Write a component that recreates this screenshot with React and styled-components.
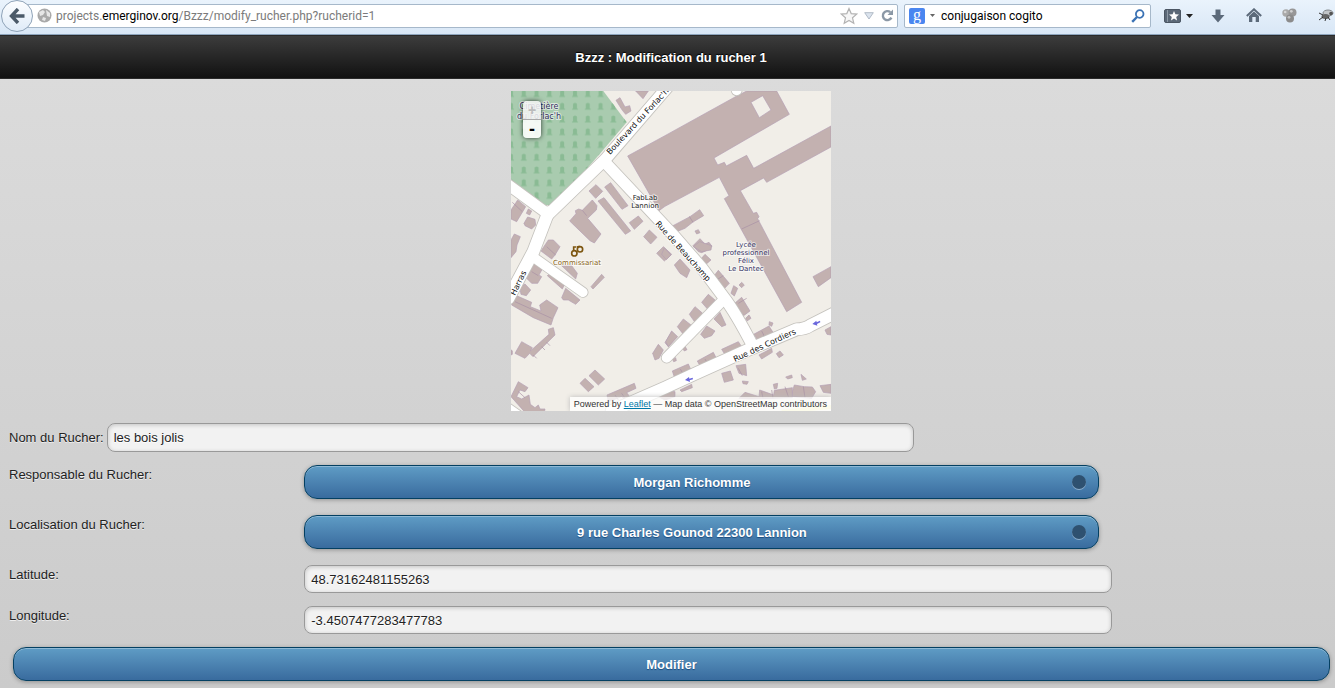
import React, { useState } from 'react'
import styled, { createGlobalStyle } from 'styled-components'

const GlobalStyle = createGlobalStyle`
* { box-sizing: border-box; }

body {
  margin: 0;
  min-height: 100vh;
  background: #cccccc linear-gradient(#dddddd, #cbcbcb) no-repeat;
  color: #222;
  font-family: 'Liberation Sans', Arial, sans-serif;
  font-size: 13px;
}
`

/* ---------- browser bar ---------- */

const Toolbar = styled.nav`
display: flex;
align-items: center;
height: 35px;
padding: 0 0 3px 1px;
background: linear-gradient(#eaf3fc, #d9e7f6);
border-bottom: 1px solid #8ea5bd;
font-family: Roboto, 'Open Sans', sans-serif;
font-size: 12px;
`

const IconButton = styled.button`
display: flex;
align-items: center;
justify-content: ${props => props.$align || 'center'};
gap: 5px;
flex: none;
width: ${props => props.$width || 20}px;
height: 24px;
padding: 0;
border: none;
background: none;
`

const BackButton = styled(IconButton)`
position: relative;
z-index: 1;
width: 32px;
height: 32px;
margin-right: -8px;
border: 1px solid #8fa3b8;
border-radius: 50%;
background: linear-gradient(#fdfeff, #dfebf8);
`

const Field = styled.div`
display: flex;
align-items: center;
height: 24px;
background: white;
border: 1px solid #a6b8ca;
border-radius: 2px;
`

const UrlField = styled(Field)`
flex: 1;
min-width: 0;
padding: 0 2px 0 11px;
`

const Address = styled.a`
flex: 1;
min-width: 0;
margin-left: 4px;
overflow: hidden;
white-space: nowrap;
color: #7b7b7b;
text-decoration: none;

span { color: black; }
`

const SearchField = styled(Field)`
flex: none;
width: 247px;
margin: 0 5px 0 6px;
padding: 0 2px 0 4px;

input {
  flex: 1;
  min-width: 0;
  padding: 0;
  margin-left: 1px;
  border: none;
  outline: none;
  background: none;
  color: black;
  font: inherit;
}
`

const Engine = styled.span`
width: 16px;
height: 16px;
border-radius: 2px;
background: #4a86f0;
color: white;
font: 16px/13px 'Liberation Serif', serif;
text-align: center;
`

/* ---------- page ---------- */

const Header = styled.header`
height: 44px;
padding-left: 7px;
background: linear-gradient(#3c3c3c, #111111);
border-top: 1px solid #2a2a2a;
border-bottom: 1px solid #2a2a2a;
color: white;
text-align: center;
text-shadow: 0 -1px 1px black;

h1 {
  margin: 0;
  font-size: 13px;
  line-height: 43px;
}
`

const Content = styled.main`
padding: 12px 2px 7px 9px;
`

const MapBox = styled.div`
position: relative;
width: 320px;
height: 320px;
margin: 0 auto 12px;
overflow: hidden;
background: #f1eee8;

svg { display: block; }
`

const ZoomControl = styled.div`
position: absolute;
top: 10px;
left: 12px;
width: 18px;
border-radius: 4px;
box-shadow: 0 0 5px rgba(0, 0, 0, 0.7);
overflow: hidden;

button {
  display: block;
  width: 18px;
  height: 18px;
  padding: 0;
  border: none;
  background: rgba(255, 255, 255, 0.88);
  color: black;
  font: bold 18px/16px 'Liberation Sans', sans-serif;
}

button:first-child {
  height: 19px;
  border-bottom: 1px solid #aaa;
  font-size: 14px;
}

button:disabled {
  background: rgba(244, 244, 244, 0.85);
  color: #bbb;
}
`

const Attribution = styled.div`
position: absolute;
right: 0;
bottom: 0;
padding: 0 4px;
background: rgba(255, 255, 255, 0.75);
box-shadow: 0 0 5px #bbb;
color: #333;
font-size: 9px;
line-height: 14px;
white-space: nowrap;

a { color: #0078a8; }
`

const Row = styled.div`
display: flex;
align-items: ${props => props.$inline ? 'center' : 'flex-start'};
gap: ${props => props.$inline ? 3 : 4}px;
margin-bottom: ${props => props.$space || 13}px;
`

const Label = styled.label`
flex: 0 0 ${props => props.$auto ? 'auto' : '22%'};
line-height: 19px;
text-shadow: 0 1px 0 #eee;
`

const TextInput = styled.input`
width: calc(60% + 13px);
height: ${props => props.$height || 28}px;
padding: 0 6px;
background: #f2f2f2;
border: 1px solid #999;
border-radius: 8px;
box-shadow: inset 0 1px 4px rgba(0, 0, 0, 0.2);
color: #222;
font: inherit;
text-shadow: 0 1px 0 white;
`

const blue = `
height: 34px;
background: linear-gradient(#5f9cc5, #396b9e);
border: 1px solid #044062;
border-radius: 13px;
box-shadow: inset 0 1px 0 rgba(255, 255, 255, 0.3), 0 1px 4px rgba(0, 0, 0, 0.3);
color: white;
font: bold 13px 'Liberation Sans', Arial, sans-serif;
text-shadow: 0 1px 1px #194b7e;
`

const SelectWrap = styled.div`
position: relative;
width: 60%;

&::after {
  content: '';
  position: absolute;
  top: 10px;
  right: 13px;
  width: 14px;
  height: 14px;
  border-radius: 50%;
  background: #2e5170;
  box-shadow: 0 1px 0 rgba(255, 255, 255, 0.4);
  pointer-events: none;
}
`

const Select = styled.select`
${blue}
display: block;
width: 100%;
padding: 0 19px 0 0;
appearance: none;
text-align: center;
text-align-last: center;
`

const Submit = styled.button`
${blue}
display: block;
width: calc(100% - 7px);
margin: 0 3px 0 4px;
padding: 0;
`

/* ---------- map data, drawn on a 3x grid and scaled down ---------- */

const roads = [
  { d: 'M500 -8 L300 224 L130 388', w: 34 },
  { d: 'M0 292 L130 388', w: 32 },
  { d: 'M130 382 L85 500 L10 640', w: 36 },
  { d: 'M90 520 L234 622', w: 28 },
  { d: 'M300 232 L510 456 L590 548 L655 635 Q690 680 742 780', w: 34 },
  { d: 'M655 645 L485 818', w: 30 },
  { d: 'M990 684 L915 722 Q900 732 875 733 L740 790 L580 862 L480 908 L320 978', w: 36 },
  { d: 'M695 0 V16', w: 30 },
  { d: 'M0 958 L60 1000', w: 20 },
]

const cemetery = 'M18 18 H295 L365 112 L290 200 L150 360 H118 L18 285 Z'

const school = 'M368 213 L480 152 L690 36 L725 18 L815 18 L853 88 L627 219 L638 240 L658 232 L664 243 L725 211 L746 250 L978 123 V186 L785 292 L776 279 L706 317 L745 385 L755 382 L762 395 L758 401 L890 652 L845 680 L658 341 L672 332 L643 277 L480 364 L462 377 Z M738 52 L763 98 L798 75 L773 32 Z'

const blocks = [
  { x: 0, y: 0, shapes: [
    '333,46 345,38 360,66 374,62 378,78 362,88 352,76',
    '392,18 430,18 414,41',
    '252,318 273,299 293,319 272,340',
    '299,306 317,293 369,362 351,373',
    '279,348 297,338 377,438 361,448',
    '194,408 213,386 211,377 221,372 232,376 262,345 276,362 274,375 248,400 288,447 268,474 255,467',
    '373,413 400,393 414,409 388,433',
    '416,455 433,435 456,457 437,477',
    '455,505 475,485 500,508 478,528',
    '18,375 38,345 62,365 35,410 18,402',
    '64,385 70,372 80,378 74,390',
    '57,415 68,396 90,403 92,420 80,432 60,422',
    '18,465 28,447 46,455 36,480 33,500 18,518',
  ] },
  { x: 480, y: 0, shapes: [
    '24,422 75,395 104,374 116,392 84,411 60,430 35,440',
    '90,438 100,434 105,443 95,447',
    '84,482 105,461 120,477 132,472 141,484 122,498 110,503 100,500',
    '-2,488 18,510 4,524 -10,508',
  ] },
  { x: 0, y: 480, shapes: [
    '108,18 130,-15 145,-15 165,5 150,30 140,42',
    '78,72 90,50 112,72 102,90 110,95 98,115 80,115 60,95',
    '44,125 60,117 77,135 64,152 48,148',
    '127,92 135,85 178,120 172,132',
    '170,62 200,62 217,85 212,102',
    '258,125 290,88 298,97 264,132',
    '170,158 182,130 225,165 212,178 190,165 175,165',
    '20,180 30,150 80,172 76,185 108,198 104,180 125,165 159,188 145,218 138,240 85,218',
    '30,325 50,290 82,308 76,318 132,268 130,253 145,248 150,270 84,335 74,325 60,340',
    '18,314 22,318 22,328 18,330',
    '225,415 240,400 267,425 250,440',
    '252,392 270,375 299,402 280,420',
    '306,450 388,415 393,430 365,443 380,462 366,470 350,455 310,470',
    '18,455 40,410 69,428 60,440 45,435 35,455 50,462 72,450 76,478 90,488 100,480 105,492 120,492 118,502 60,502',
    '443,325 460,298 475,315 462,340 450,345',
    '480,293 500,260 515,275 490,305',
  ] },
  { x: 480, y: 480, shapes: [
    '85,5 104,-10 140,2 138,15 110,20',
    '105,45 120,28 138,45 118,62',
    '28,60 45,42 75,75 65,98 45,85',
    '143,98 160,76 193,115 177,132',
    '198,145 206,122 218,130 208,153',
    '222,120 230,112 238,120 230,128',
    '209,175 230,157 255,198 236,212',
    '242,220 252,210 258,220 246,228',
    '110,172 130,148 150,165 130,195',
    '73,208 90,185 113,205 90,232',
    '37,245 55,222 78,240 55,268',
    '2,290 20,258 38,275 10,305',
    '147,222 165,202 183,240 170,245',
    '107,268 125,243 150,258 140,272 118,280',
    '266,268 312,243 324,262 280,288',
    '313,230 324,234 320,244 312,240',
    '170,313 220,290 230,305 182,332',
    '97,348 145,322 155,342 108,368',
    '22,378 70,357 78,375 30,402',
    '282,330 320,310 322,322 290,342',
    '334,326 345,318 355,330 342,338',
    '213,362 242,358 245,392 222,385',
    '170,385 196,378 205,405 178,412',
    '232,408 250,410 246,418 234,416',
    '362,396 380,390 382,398 368,402',
    '408,388 424,402 412,406',
    '382,440 388,420 418,425 442,426 452,440 440,460 382,455',
    '465,422 498,418 498,445 475,442',
    '222,460 240,442 282,455 284,435 326,450 328,436 382,428 382,458 260,462',
    '325,418 338,415 336,430 328,432',
    '444,95 498,65 498,98 460,125',
    '480,255 498,245 498,270 486,268',
    '-20,455 10,438 30,440 30,455 0,465',
    '45,435 80,418 82,428 50,440',
    '22,342 32,338 34,347 26,350',
    '52,310 60,304 66,314 58,318',
  ] },
]

// party walls between neighbouring houses
const walls = 'M710 432 L764 407 M553 394 L564 412 M30 650 L140 700 M80 560 L100 572 M125 485 L152 510 M22 352 L52 380 M700 850 L712 872 M526 852 L538 874 M600 822 L612 844 M770 738 L780 758 M670 798 L680 818 M700 655 L725 640 M635 585 L655 572 M840 905 L850 935 M895 905 L900 938 M800 915 L804 940 M770 920 L774 940 M330 930 L340 945 M350 925 L362 942 M40 920 L60 938 M85 810 L95 820 M110 785 L120 795 M125 772 L135 782 M232 376 L245 392'

const streets = [
  { text: 'Boulevard du Forlac\'h', x: 99, y: 64, angle: -47 },
  { text: 'Rue de Beauchamp', x: 144, y: 133, angle: 48 },
  { text: 'Rue des Cordiers', x: 224, y: 271, angle: -25 },
  { text: 'Harras', x: 4, y: 205, angle: -64 },
]

const places = [
  { lines: ['Cimetière', 'du Forlac\'h'], x: 28, y: 18, color: '#34315f', size: 8 },
  { lines: ['FabLab', 'Lannion'], x: 134, y: 109, color: '#222222', size: 7 },
  { lines: ['Lycée', 'professionnel', 'Félix', 'Le Dantec'], x: 235, y: 156, color: '#34315f', size: 7 },
  { lines: ['Commissariat'], x: 66, y: 174, color: '#8a6420', size: 7 },
]

const MapLabel = styled.text`
font-family: 'DejaVu Sans', sans-serif;
font-size: ${props => props.$size || 8}px;
fill: ${props => props.$color || '#111'};
stroke: ${props => props.$halo || 'none'};
stroke-width: 2px;
stroke-linejoin: round;
paint-order: stroke;
`

const StreetMap = () => {
  return (
    <svg width="320" height="320" viewBox="0 0 320 320" role="img" aria-label="Carte">
      <defs>
        <pattern id="tombs" x="0" y="5" width="38.4" height="38.2" patternUnits="userSpaceOnUse">
          <path d="M9 28 H12 V15 Q12 10 18 10 Q24 10 24 15 V28 H27 V31 H9 Z" fill="#8abb94" />
        </pattern>
      </defs>
      <g transform="scale(0.33333) translate(-18 -18)">
        <path d={cemetery} fill="#a9cbaf" />
        <path d={cemetery} fill="url(#tombs)" />
        <g fill="#c3b1b0" stroke="#b49fb3" strokeWidth="2">
          <path d={school} fillRule="evenodd" />
          {blocks.map(block => (
            <g key={`${block.x}-${block.y}`} transform={`translate(${block.x} ${block.y})`}>
              {block.shapes.map(points => <polygon key={points} points={points} />)}
            </g>
          ))}
          <path d={walls} fill="none" stroke="#a78fa5" />
        </g>
        <g fill="none" strokeLinecap="round" strokeLinejoin="round">
          {roads.map(road => <path key={road.d} d={road.d} stroke="#c4c2bd" strokeWidth={road.w + 5} />)}
          {roads.map(road => <path key={road.d} d={road.d} stroke="#ffffff" strokeWidth={road.w} />)}
        </g>
        <path d="M830 980 L978 966" stroke="#f3efae" strokeWidth="12" />
        <g fill="#6a67dc">
          <path d="M540 885 L552 876 L553 881 L563 878 L564 883 L554 886 L555 891 Z" />
          <path d="M922 717 L934 707 L935 712 L945 707 L946 712 L936 717 L937 722 Z" />
        </g>
        <g fill="none" stroke="#7d5610" strokeWidth="5">
          <circle cx="208" cy="505" r="8" />
          <circle cx="225" cy="493" r="8" />
          <path d="M206 496 V486 H214 M216 486 L224 484" />
        </g>
      </g>
      {streets.map(street => (
        <MapLabel key={street.text} $halo="white"
          transform={`translate(${street.x} ${street.y}) rotate(${street.angle})`}>
          {street.text}
        </MapLabel>
      ))}
      {places.map(place => (
        <MapLabel key={place.lines[0]} $size={place.size} $color={place.color}
          $halo="rgba(255, 255, 255, 0.6)" textAnchor="middle">
          {place.lines.map((line, i) => (
            <tspan key={line} x={place.x} y={place.y + i * (place.size === 7 ? 8 : 10)}>{line}</tspan>
          ))}
        </MapLabel>
      ))}
    </svg>
  )
}

const BrowserBar = () => {
  return (
    <Toolbar>
      <BackButton aria-label="Page précédente">
        <svg width="16" height="16" viewBox="0 0 16 16" fill="none" stroke="#4b5a69" strokeWidth="3.4">
          <path d="M9 1 L2.5 8 L9 15 M2.5 8 H15.5" />
        </svg>
      </BackButton>
      <UrlField>
        <svg width="15" height="15" viewBox="0 0 15 15">
          <circle cx="7.5" cy="7.5" r="7" fill="#a9a9a9" />
          <path d="M2 4 L6 2 L8 4 L6 7 L3 8 Z M9 2 L13 5 L13 9 L10 8 Z M6 9 L9 10 L8 13 L5 12 Z" fill="#e6e6e6" />
        </svg>
        <Address href="/">projects.<span>emerginov.org</span>/Bzzz/modify_rucher.php?rucherid=1</Address>
        <IconButton aria-label="Marquer cette page">
          <svg width="18" height="18" viewBox="0 0 18 18">
            <path d="M9 1.5 L11.2 6.6 L16.7 7.1 L12.5 10.8 L13.8 16.3 L9 13.4 L4.2 16.3 L5.5 10.8 L1.3 7.1 L6.8 6.6 Z" fill="#f7f7f7" stroke="#b3b3b3" strokeWidth="1.2" />
          </svg>
        </IconButton>
        <IconButton aria-label="Historique">
          <svg width="10" height="8" viewBox="0 0 10 8">
            <path d="M0.7 0.7 H9.3 L5 7 Z" fill="#dce4ee" stroke="#b0bac6" />
          </svg>
        </IconButton>
        <IconButton $width={16} aria-label="Actualiser">
          <svg width="13" height="13" viewBox="0 0 13 13">
            <path d="M9.3 3.2 A4.5 4.5 0 1 0 10.4 8.6" fill="none" stroke="#8b98a6" strokeWidth="2.4" />
            <path d="M12 0.5 V6 H6.5 Z" fill="#8b98a6" />
          </svg>
        </IconButton>
      </UrlField>
      <SearchField>
        <Engine>g</Engine>
        <IconButton $width={15} aria-label="Moteurs de recherche">
          <svg width="5" height="3" viewBox="0 0 5 3"><path d="M0 0 H5 L2.5 3 Z" fill="#666" /></svg>
        </IconButton>
        <input aria-label="Recherche" defaultValue="conjugaison cogito" />
        <IconButton aria-label="Rechercher">
          <svg width="14" height="14" viewBox="0 0 14 14" fill="none" stroke="#3a72b4">
            <circle cx="8.7" cy="5" r="3.8" strokeWidth="1.8" />
            <path d="M6 8 L1.2 12.8" strokeWidth="2.4" />
          </svg>
        </IconButton>
      </SearchField>
      <IconButton $width={44} aria-label="Marque-pages">
        <svg width="17" height="14" viewBox="0 0 17 14">
          <rect x="0.5" y="0.5" width="16" height="13" rx="1.5" fill="#5b6877" stroke="#4b5663" />
          <path d="M3.5 1 V13" stroke="#8c98a5" />
          <path d="M10 2 L11.4 5.3 L15 5.5 L12.2 7.9 L13.1 11.5 L10 9.5 L6.9 11.5 L7.8 7.9 L5 5.5 L8.6 5.3 Z" fill="white" />
        </svg>
        <svg width="7" height="4" viewBox="0 0 7 4"><path d="M0 0 H7 L3.5 4 Z" fill="#222" /></svg>
      </IconButton>
      <IconButton $width={36} aria-label="Téléchargements">
        <svg width="14" height="14" viewBox="0 0 14 14">
          <path d="M4.5 0.5 H9.5 V6 H13.5 L7 13.5 L0.5 6 H4.5 Z" fill="#5c6a7a" />
        </svg>
      </IconButton>
      <IconButton $width={36} aria-label="Accueil">
        <svg width="16" height="15" viewBox="0 0 16 15">
          <path d="M0.8 8 L8 1.3 L15.2 8" fill="none" stroke="#5c6a7a" strokeWidth="2" />
          <path d="M3 8 L8 3.5 L13 8 V14 H9.7 V9 H6.3 V14 H3 Z" fill="#5c6a7a" />
        </svg>
      </IconButton>
      <IconButton $width={34} aria-label="Extension">
        <svg width="15" height="15" viewBox="0 0 15 15">
          <circle cx="4" cy="5" r="3.7" fill="#a9a9a9" />
          <circle cx="10.5" cy="4.5" r="4" fill="#979797" />
          <circle cx="8" cy="10.5" r="4" fill="#8b8b8b" />
          <circle cx="3.2" cy="4" r="1.3" fill="#d6d6d6" />
          <circle cx="9.3" cy="3.3" r="1.4" fill="#cfcfcf" />
          <circle cx="7" cy="9.3" r="1.4" fill="#c3c3c3" />
        </svg>
      </IconButton>
      <IconButton $width={29} $align="flex-end" aria-label="Mouche">
        <svg width="18" height="14" viewBox="0 0 18 14">
          <ellipse cx="11" cy="4" rx="5" ry="3" fill="#c3c6c9" stroke="#83878a" />
          <ellipse cx="8.5" cy="7.5" rx="4" ry="2.5" fill="#666666" />
          <circle cx="14" cy="4.5" r="1.8" fill="#555555" />
          <path d="M2 4 L6 6 M2 11 L6 8 M8 12 L9 9 M13 11 L11 8" stroke="#333" fill="none" />
        </svg>
      </IconButton>
    </Toolbar>
  )
}

const App = () => {
  const [nom, setNom] = useState('les bois jolis')
  const [latitude, setLatitude] = useState('48.73162481155263')
  const [longitude, setLongitude] = useState('-3.4507477283477783')

  return (
    <>
      <GlobalStyle />
      <BrowserBar />
      <Header><h1>Bzzz : Modification du rucher 1</h1></Header>
      <Content>
        <MapBox>
          <StreetMap />
          <ZoomControl>
            <button disabled>+</button>
            <button>-</button>
          </ZoomControl>
          <Attribution>
            Powered by <a href="/">Leaflet</a> — Map data © OpenStreetMap contributors
          </Attribution>
        </MapBox>
        <form onSubmit={e => e.preventDefault()}>
          <Row $inline>
            <Label $auto htmlFor="nom">Nom du Rucher:</Label>
            <TextInput id="nom" $height={29} value={nom} onChange={e => setNom(e.target.value)} />
          </Row>
          <Row $space={16}>
            <Label htmlFor="responsable">Responsable du Rucher:</Label>
            <SelectWrap>
              <Select id="responsable">
                <option>Morgan Richomme</option>
              </Select>
            </SelectWrap>
          </Row>
          <Row $space={16}>
            <Label htmlFor="localisation">Localisation du Rucher:</Label>
            <SelectWrap>
              <Select id="localisation">
                <option>9 rue Charles Gounod 22300 Lannion</option>
              </Select>
            </SelectWrap>
          </Row>
          <Row>
            <Label htmlFor="latitude">Latitude:</Label>
            <TextInput id="latitude" value={latitude} onChange={e => setLatitude(e.target.value)} />
          </Row>
          <Row>
            <Label htmlFor="longitude">Longitude:</Label>
            <TextInput id="longitude" value={longitude} onChange={e => setLongitude(e.target.value)} />
          </Row>
          <Submit type="submit">Modifier</Submit>
        </form>
      </Content>
    </>
  )
}

export default App
